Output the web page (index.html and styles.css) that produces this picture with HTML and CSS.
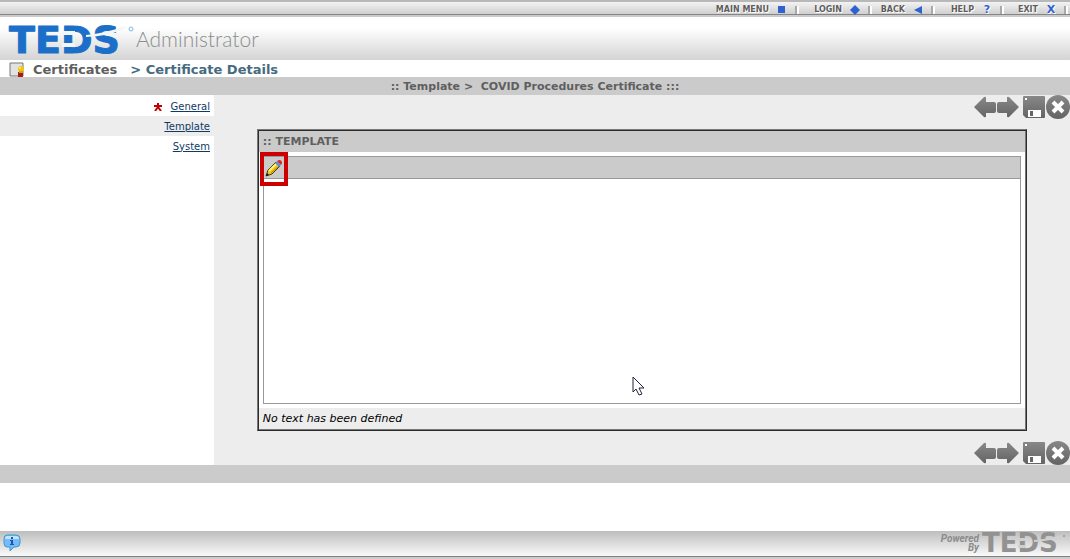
FILE: index.html
```html
<!DOCTYPE html>
<html lang="en">
<head>
<meta charset="utf-8">
<title>TEDS Administrator</title>
<link rel="stylesheet" href="styles.css">
</head>
<body>
<svg class="defs" aria-hidden="true">
  <defs>
    <linearGradient id="steel" x1="0" y1="0" x2="0" y2="1"><stop offset="0" stop-color="#888"/><stop offset="1" stop-color="#646464"/></linearGradient>
    <symbol id="prev" viewBox="0 0 22 22"><path d="M0 11 10 1q2-1 2 1v4h8q2 0 2 2v7q0 2-2 2h-8v3q0 2-2 1z" fill="url(#steel)"/></symbol>
    <symbol id="next" viewBox="0 0 22 22"><path d="M22 11 12 1q-2-1-2 1v4H2Q0 6 0 8v7q0 2 2 2h8v3q0 2 2 1z" fill="url(#steel)"/></symbol>
    <symbol id="save" viewBox="0 0 22 22"><path d="M0 1q0-1 1-1h20q1 0 1 1v20q0 1-1 1H3l-3-3z" fill="url(#steel)"/><path d="M2 2h2v2H2zM5 14h13v7H5z" fill="#fff"/><path d="M7 15h3v5H7z" fill="#666"/></symbol>
    <symbol id="close" viewBox="0 0 24 24"><circle cx="12" cy="12" r="12" fill="url(#steel)"/><path d="m7 7 10 10M17 7 7 17" stroke="#fff" stroke-width="4"/></symbol>
  </defs>
</svg>

<nav class="menu" aria-label="Main">
  <a class="menu-item" href="#">MAIN MENU <svg width="10" height="10"><path d="M1 1h7v7H1z" fill="#2f62d0"/></svg></a>
  <a class="menu-item" href="#">LOGIN <svg width="10" height="10"><path d="m5 0 5 5-5 5-5-5z" fill="#2f62d0"/></svg></a>
  <a class="menu-item" href="#">BACK <svg width="10" height="10"><path d="M9 1v8L1 5z" fill="#2f62d0"/></svg></a>
  <a class="menu-item" href="#">HELP <b class="mark">?</b></a>
  <a class="menu-item" href="#">EXIT <b class="mark">X</b></a>
</nav>

<header class="brand">
  <svg class="logo" width="128" height="43" role="img" aria-label="TEDS">
    <text class="logo-text" x="1" y="36">TEDS</text>
    <path class="logo-cut" d="M54 14h13v4H54zM54 26h13v4H54z"/>
    <path class="logo-cut" d="M78 18Q98 16 118 9l-2 3q-16 7-38 8z"/>
    <circle cx="123" cy="12" r="2" fill="none" stroke="#86b4e2"/>
  </svg>
  <span class="product">Administrator</span>
</header>

<div class="crumbs">
  <svg width="16" height="16"><path d="M1 1h13v13H1z" fill="#e2e2e2" stroke="#777"/><path d="M9 10h5v6l-3-1-2 1z" fill="#a51d18"/><circle cx="12" cy="7" r="3" fill="#f4c414"/><path d="M10 9h4v2h-4z" fill="#df9f00"/><circle cx="11" cy="6" r="1" fill="#fff18b"/></svg>
  <a class="crumb" href="#">Certificates</a>
  <span class="crumb crumb-here">&gt; Certificate Details</span>
</div>

<h1 class="title">:: Template &gt;&nbsp; COVID Procedures Certificate :::</h1>

<div class="layout">
  <nav class="side" aria-label="Sections">
    <div class="side-row"><svg class="star" width="8" height="8"><path d="M4 0v4M0 3h8M4 4 1 8M4 4l3 4" stroke="#c00000" stroke-width="2"/></svg><a href="#">General</a></div>
    <div class="side-row side-active"><a href="#">Template</a></div>
    <div class="side-row"><a href="#">System</a></div>
  </nav>
  <main class="main">
    <div class="tools">
      <button class="tool" aria-label="Previous"><svg width="22" height="22"><use href="#prev"/></svg></button>
      <button class="tool" aria-label="Next"><svg width="22" height="22"><use href="#next"/></svg></button>
      <button class="tool tool-save" aria-label="Save"><svg width="22" height="22"><use href="#save"/></svg></button>
      <button class="tool" aria-label="Close"><svg width="24" height="24"><use href="#close"/></svg></button>
    </div>
    <section class="panel">
      <h2 class="panel-title">:: TEMPLATE</h2>
      <div class="editor">
        <div class="editor-bar">
          <button class="edit" aria-label="Edit"><svg width="18" height="18" viewBox="0 0 18 18"><path d="m1 17 2-6 8-8 4 4-8 8z" fill="#edc51c" stroke="#493b12"/><path d="m4 12 7-7" stroke="#fff27a" stroke-width="2"/><path d="m6 14 8-7" stroke="#b68309"/><path d="m10 4 2-2 4 4-2 2z" fill="#5a8fe0"/><path d="m12 2 2-1q3 0 3 3l-1 2z" fill="#dd261c"/><path d="m1 17 1-3 2 2z" fill="#111"/></svg></button>
        </div>
        <div class="editor-page">
          <svg class="pointer" width="13" height="20"><path d="M1 1v15l3-3 3 6 3-1-3-6h5z" fill="#fff" stroke="#23233a"/></svg>
        </div>
      </div>
      <p class="panel-note">No text has been defined</p>
    </section>
    <div class="tools">
      <button class="tool" aria-label="Previous"><svg width="22" height="22"><use href="#prev"/></svg></button>
      <button class="tool" aria-label="Next"><svg width="22" height="22"><use href="#next"/></svg></button>
      <button class="tool tool-save" aria-label="Save"><svg width="22" height="22"><use href="#save"/></svg></button>
      <button class="tool" aria-label="Close"><svg width="24" height="24"><use href="#close"/></svg></button>
    </div>
  </main>
</div>
<div class="rule"></div>

<footer class="footer">
  <svg width="18" height="18"><path d="M4 1h9q4 0 4 4v4q0 4-4 4h-2l-4 4v-4H4q-3 0-3-4V5q0-4 3-4z" fill="#79b8fa" stroke="#36a0c5"/><path d="M4 2h9q3 0 3 3H2q0-3 2-3z" fill="#c0e4ff"/><path d="M8 3h2v2H8zM7 6h3v4h1v1H7v-1h1V7H7z" fill="#145cab"/></svg>
  <div class="powered">
    <span class="powered-text">Powered<br>By</span>
    <svg class="logo" width="86" height="24" role="img" aria-label="TEDS">
      <text class="logo-small" x="1" y="18">TEDS</text>
      <path d="M37 4h8v3h-8zM37 11h8v3h-8z" fill="#d0d0d0"/>
      <path d="M53 6q15-1 28-5l-2 2q-10 4-26 5z" fill="#d0d0d0"/>
      <circle cx="83" cy="2" r="1" fill="#999"/>
    </svg>
  </div>
</footer>
</body>
</html>
```
FILE: styles.css
```css
* { box-sizing: border-box; }
body {
  margin: 0;
  min-height: 100vh;
  display: flex;
  flex-direction: column;
  background: #fff;
  color: #000;
  font: 11px/20px Verdana, "DejaVu Sans", sans-serif;
}
svg { display: block; flex: none; }
.defs { position: absolute; width: 0; height: 0; }
button { border: 0; padding: 0; background: none; cursor: pointer; }

.menu {
  display: grid;
  grid-template-columns: 82px 73px 63px 69px 64px;
  justify-content: end;
  height: 17px;
  padding: 2px 2px 0 0;
  border-top: 2px solid #b8b8b8;
  background: linear-gradient(#f3f3f3, #cfcfcf 12px, #858585 12px, #858585 13px, #cbcbcb 13px);
}
.menu-item {
  display: flex;
  align-items: center;
  justify-content: flex-end;
  gap: 8px;
  height: 11px;
  color: #5e5e5e;
  font-size: 8px;
  line-height: 11px;
  font-weight: bold;
  text-decoration: none;
  white-space: nowrap;
  text-shadow: 0 0 1px #fff, 1px 1px 0 #fff;
}
.menu-item::after {
  content: "";
  height: 8px;
  border-left: 2px solid #a8a8a8;
  border-right: 2px solid #fff;
}
.mark { width: 10px; color: #2f62d0; font-size: 11px; text-align: center; }

.brand {
  display: flex;
  align-items: center;
  height: 43px;
  padding: 0 8px;
  background: linear-gradient(#fff 25%, #d4d4d4);
}
.logo { overflow: visible; }
.logo-text {
  fill: #1b6fc9;
  stroke: #1b6fc9;
  stroke-linejoin: round;
  font: bold 38px "DejaVu Sans", sans-serif;
}
.logo-cut { fill: #f5f5f5; }
.product { color: #8d8d8d; font: 300 21px/24px Lato, sans-serif; }

.crumbs {
  display: flex;
  align-items: center;
  height: 17px;
  padding: 2px 9px 0;
  font-size: 13px;
  line-height: 16px;
  font-weight: bold;
}
.crumb { margin-left: 8px; color: #5f5f5f; text-decoration: none; }
.crumb-here { margin-left: 13px; color: #466b80; }

.title {
  margin: 0;
  padding-top: 1px;
  background: #cbcbcb;
  color: #5f5f5f;
  font-size: 11px;
  line-height: 17px;
  text-align: center;
}
.layout { display: grid; grid-template-columns: 20% 1fr; min-height: 370px; }
.side { padding-top: 1px; font-size: 10px; }
.side-row {
  display: flex;
  align-items: center;
  justify-content: flex-end;
  height: 20px;
  padding: 1px 4px 0 0;
}
.side-row a { color: #0f3a66; }
.side-active { background: #ededed; }
.star { margin-right: 9px; }

.main { background: #ededed; }
.tools { display: flex; align-items: center; justify-content: flex-end; height: 24px; }
.tool { margin-left: 1px; }
.tool-save { margin-left: 4px; }

.panel {
  width: 90%;
  margin: 10px auto;
  padding: 1px;
  border: 1px solid #777;
  border-right-color: #2d2d2d;
  border-bottom-color: #2d2d2d;
  background: #fff;
  box-shadow: inset 1px 1px #2d2d2d, inset -1px -1px #777;
}
.panel-title {
  margin: 0;
  padding: 1px 0 0 4px;
  background: #cbcbcb;
  color: #5f5f5f;
  font-size: 11px;
  line-height: 20px;
}
.editor { margin: 4px; border: 1px solid #999; }
.editor-bar {
  position: relative;
  height: 22px;
  background: #cbcbcb;
  border-bottom: 1px solid #999;
}
.edit {
  position: absolute;
  left: -4px;
  top: -5px;
  display: grid;
  place-items: center;
  width: 28px;
  height: 34px;
  padding-bottom: 2px;
  border: 4px solid #c00;
}
.editor-page { position: relative; height: 224px; }
.pointer { position: absolute; left: 368px; top: 197px; }
.panel-note {
  margin: 0;
  padding: 1px 0 0 4px;
  background: #ededed;
  line-height: 20px;
  font-style: italic;
}
.rule { height: 18px; background: #cbcbcb; }

.footer {
  display: flex;
  justify-content: space-between;
  height: 28px;
  margin-top: auto;
  padding: 3px 3px 0;
  background: linear-gradient(#bdbdbd, #fafafa 25px, #808080 25px, #808080 26px, #ccc 26px);
}
.powered { display: flex; gap: 2px; }
.powered-text {
  color: #8b8b8b;
  font: italic bold 10px/9px Roboto, sans-serif;
  text-align: right;
}
.logo-small { fill: #929292; font: bold 26px "DejaVu Sans", sans-serif; }
```
